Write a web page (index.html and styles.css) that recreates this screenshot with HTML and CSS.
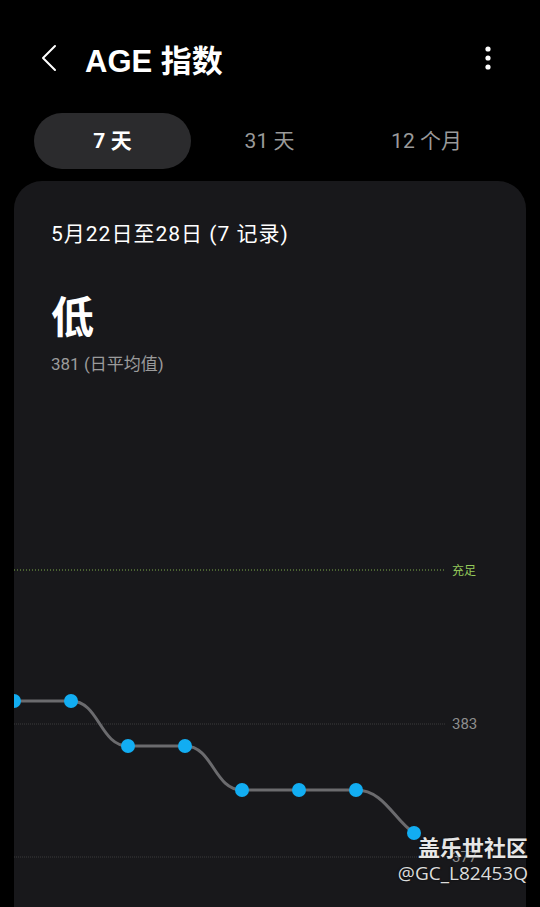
FILE: index.html
```html
<!DOCTYPE html>
<html lang="zh">
<head>
    <meta charset="UTF-8">
    <meta name="viewport" content="width=device-width, initial-scale=1.0">
    <title>AGE 指数</title>
    <link rel="stylesheet" href="styles.css">
</head>
<body>
    <div id="app">
        <!-- top bar -->
        <div class="top-bar">
            <svg class="back-icon" width="20" height="28" viewBox="0 0 20 28">
                <path d="M15 2 L3 14 L15 26" fill="none" stroke="#fff" stroke-width="2" stroke-linecap="round" stroke-linejoin="round"/>
            </svg>
            <h1 class="title">AGE 指数</h1>
            <svg class="menu-icon" width="8" height="26" viewBox="0 0 8 26">
                <circle cx="4" cy="4" r="2.6" fill="#fff"/>
                <circle cx="4" cy="13" r="2.6" fill="#fff"/>
                <circle cx="4" cy="22" r="2.6" fill="#fff"/>
            </svg>
        </div>

        <!-- period tabs -->
        <div class="tabs">
            <div class="tab active">7 天</div>
            <div class="tab">31 天</div>
            <div class="tab">12 个月</div>
        </div>

        <!-- main card -->
        <div class="card">
            <div class="range">5月22日至28日 (7 记录)</div>
            <div class="level">低</div>
            <div class="avg">381 (日平均值)</div>

            <svg class="chart" width="512" height="380" viewBox="0 0 512 380">
                <line x1="0" y1="30" x2="432" y2="30" stroke="#7fae4a" stroke-width="1" stroke-dasharray="1 2"/>
                <text x="438" y="35" class="lbl-good">充足</text>

                <line x1="0" y1="184" x2="432" y2="184" stroke="#3a3a3d" stroke-width="1" stroke-dasharray="1 1"/>
                <text x="438" y="189" class="lbl">383</text>

                <line x1="0" y1="317" x2="432" y2="317" stroke="#3a3a3d" stroke-width="1" stroke-dasharray="1 1"/>
                <text x="438" y="322" class="lbl">377</text>

                <path d="M0 161 L57 161 C85 161 86 206 114 206 L171 206 C199 206 200 250 228 250 L342 250 C370 250 380 280 400 293"
                      fill="none" stroke="#6b6b6e" stroke-width="3"/>

                <g fill="#12adf2">
                    <circle cx="0" cy="161" r="7"/>
                    <circle cx="57" cy="161" r="7"/>
                    <circle cx="114" cy="206" r="7"/>
                    <circle cx="171" cy="206" r="7"/>
                    <circle cx="228" cy="250" r="7"/>
                    <circle cx="285" cy="250" r="7"/>
                    <circle cx="342" cy="250" r="7"/>
                    <circle cx="400" cy="293" r="7"/>
                </g>
            </svg>
        </div>

        <!-- watermark -->
        <div class="watermark">
            <div class="wm-name">盖乐世社区</div>
            <div class="wm-user">@GC_L82453Q</div>
        </div>
    </div>
</body>
</html>
```

FILE: styles.css
```css
body {
    margin: 0;
    padding: 0;
    background-color: #000;
    color: #fff;
    font-family: Roboto, "Noto Sans CJK SC", sans-serif;
    overflow: hidden;
}

#app {
    position: relative;
    height: 907px;
    overflow: hidden;
}

.top-bar {
    display: flex;
    align-items: center;
    height: 56px;
    padding: 30px 0 0 40px;
}

.back-icon {
    margin-right: 25px;
}

.title {
    flex: 1;
    margin: 0;
    font-family: "Liberation Sans", "Noto Sans CJK SC", sans-serif;
    font-size: 31px;
    font-weight: bold;
}

.menu-icon {
    margin-right: 48px;
}

.tabs {
    display: grid;
    grid-template-columns: repeat(3, 157px);
    margin: 27px 0 0 34px;
}

.tab {
    height: 56px;
    line-height: 56px;
    text-align: center;
    font-size: 21px;
    color: #9a9a9a;
    border-radius: 28px;
}

.tab.active {
    background-color: #2b2b2d;
    color: #fff;
    font-weight: bold;
}

.card {
    margin: 12px 14px 0 14px;
    padding-top: 39px;
    background-color: #18181b;
    border-radius: 28px 28px 0 0;
    overflow: hidden;
}

.range {
    padding-left: 37px;
    font-size: 21px;
    line-height: 28px;
    letter-spacing: 1px;
}

.level {
    margin-top: 43px;
    padding-left: 37px;
    font-size: 43px;
    line-height: 54px;
    font-weight: bold;
}

.avg {
    margin-top: 8px;
    padding-left: 37px;
    font-size: 17px;
    line-height: 22px;
    color: #9b9b9b;
}

.chart {
    display: block;
    margin-top: 165px;
}

.lbl {
    font-family: Roboto, sans-serif;
    font-size: 15px;
    fill: #8e8e8e;
}

.lbl-good {
    font-family: "Noto Sans CJK SC", sans-serif;
    font-size: 12px;
    fill: #93c95a;
}

.watermark {
    position: absolute;
    right: 12px;
    top: 832px;
    text-align: right;
    text-shadow: 0 0 2px rgba(0, 0, 0, 0.8);
}

.wm-name {
    font-family: "Noto Sans CJK SC", sans-serif;
    font-size: 22px;
    line-height: 28px;
    font-weight: bold;
    color: #e6e6e6;
}

.wm-user {
    font-family: "Open Sans", sans-serif;
    font-size: 19px;
    line-height: 26px;
    color: #dcdcdc;
}
```
